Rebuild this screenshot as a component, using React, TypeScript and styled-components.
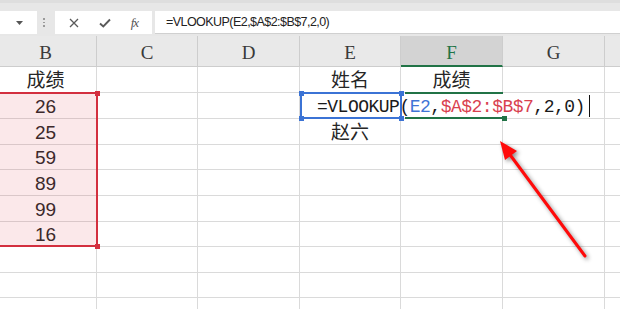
import React from 'react';
import styled, { createGlobalStyle } from 'styled-components';

const GlobalStyle = createGlobalStyle`
  html, body {
    margin: 0;
    padding: 0;
    background: #fff;
    overflow: hidden;
  }
`;

const colWidths = [102, 101, 102, 101, 102, 102, 102];
const rowHeights = [26, 26, 26, 25, 26, 26, 25, 26, 25, 26];
// H is scrolled past the right edge, so its label is not shown
const letters = ['B', 'C', 'D', 'E', 'F', 'G', ''];

// row index (1-based, as in the sheet) -> column index -> text
const data: Record<number, Record<number, string>> = {
  1: { 0: '成绩', 3: '姓名', 4: '成绩' },
  2: { 0: '26' },
  3: { 0: '25', 3: '赵六' },
  4: { 0: '59' },
  5: { 0: '89' },
  6: { 0: '99' },
  7: { 0: '16' },
};

const Page = styled.div`
  position: relative;
  width: 620px;
  height: 309px;
  overflow: hidden;
  display: flex;
  flex-direction: column;
  background: #fff;
`;

const FormulaBar = styled.div`
  display: flex;
  align-items: flex-start;
  height: 36px;
  box-sizing: border-box;
  background: #e7e7e7;
  border-top: 3px solid #dedede;
  padding-top: 8px;
  flex-shrink: 0;
`;

const NameBox = styled.div`
  width: 37px;
  height: 23px;
  background: #fff;
  display: flex;
  align-items: center;
  justify-content: flex-end;
  padding-right: 14px;
  box-sizing: border-box;
`;

const Grip = styled.div`
  width: 14px;
  margin-right: 4px;
  height: 23px;
  display: flex;
  flex-direction: column;
  align-items: center;
  justify-content: center;
  gap: 2px;
  span {
    width: 1.5px;
    height: 1.5px;
    background: #9a9a9a;
  }
`;

const ButtonGroup = styled.div`
  width: 97px;
  height: 23px;
  background: #fff;
  display: flex;
  align-items: center;
  justify-content: space-around;
  padding: 0 4px 0 4px;
  box-sizing: border-box;
`;

const FxLabel = styled.span`
  font-family: 'Liberation Serif', serif;
  font-style: italic;
  font-size: 13px;
  color: #555;
  letter-spacing: -1px;
`;

const FormulaInput = styled.div`
  flex: 1;
  height: 23px;
  margin-left: 3px;
  background: #fff;
  border-bottom: 1px solid #d0d0d0;
  box-sizing: border-box;
  display: flex;
  align-items: center;
  padding-left: 11px;
  font-family: 'Liberation Sans', 'Noto Sans CJK SC', sans-serif;
  font-size: 12.5px;
  letter-spacing: -0.55px;
  color: #222;
`;

const Sheet = styled.div<{ $cols: string; $rows: string }>`
  display: grid;
  grid-template-columns: ${(p) => p.$cols};
  grid-template-rows: ${(p) => p.$rows};
  margin-left: -5px;
`;

const HeaderCell = styled.div<{ $c: number; $active?: boolean }>`
  grid-row: 1;
  grid-column: ${(p) => p.$c + 1};
  box-sizing: border-box;
  background: ${(p) => (p.$active ? '#d3d3d3' : '#e9e9e9')};
  border-right: 1px solid #cdcdcd;
  border-bottom: ${(p) => (p.$active ? '2px solid #217346' : '1px solid #cdcdcd')};
  display: flex;
  align-items: flex-end;
  justify-content: center;
  padding-bottom: ${(p) => (p.$active ? '2px' : '3px')};
  font-family: 'Liberation Serif', serif;
  font-size: 19px;
  line-height: 20px;
  color: ${(p) => (p.$active ? '#217346' : '#3a3a3a')};
`;

const Cell = styled.div<{ $r: number; $c: number }>`
  grid-row: ${(p) => p.$r + 1};
  grid-column: ${(p) => p.$c + 1};
  box-sizing: border-box;
  border-right: 1px solid #dadada;
  border-bottom: 1px solid #dadada;
  display: flex;
  align-items: flex-end;
  justify-content: center;
  font-family: 'Liberation Sans', 'Noto Sans CJK SC', sans-serif;
  font-size: 19px;
  line-height: 22px;
  color: #262626;
  overflow: hidden;
  white-space: nowrap;
`;

const RangeMark = styled.div<{ $col: string; $row: string; $color: string; $fill?: string }>`
  grid-column: ${(p) => p.$col};
  grid-row: ${(p) => p.$row};
  position: relative;
  z-index: 2;
  margin: -1px -1px 0 0;
  border: 2px solid ${(p) => p.$color};
  background: ${(p) => p.$fill || 'transparent'};
  box-sizing: border-box;
  pointer-events: none;
`;

const Handle = styled.span<{ $color: string; $pos: 'tl' | 'tr' | 'bl' | 'br' }>`
  position: absolute;
  width: 5px;
  height: 5px;
  background: ${(p) => p.$color};
  ${(p) => (p.$pos[0] === 't' ? 'top: -3.5px;' : 'bottom: -3.5px;')}
  ${(p) => (p.$pos[1] === 'l' ? 'left: -3.5px;' : 'right: -3.5px;')}
`;

const ActiveMark = styled.div`
  grid-column: 5;
  grid-row: 3;
  position: relative;
  z-index: 2;
  margin: -1px 0 0 4px;
  border-top: 2px solid #217346;
  border-bottom: 2px solid #217346;
  pointer-events: none;
`;

const Editor = styled.div`
  grid-column: 4 / 7;
  grid-row: 3;
  z-index: 1;
  margin: 0 8px 1px 0;
  background: #fff;
  display: flex;
  align-items: center;
  padding: 2px 0 0 17px;
  font-family: 'Liberation Mono', monospace;
  font-size: 18px;
  letter-spacing: -0.5px;
  color: #1a1a1a;
  white-space: nowrap;
`;

const RefText = styled.span<{ $color: string }>`
  color: ${(p) => p.$color};
`;

const Caret = styled.span`
  display: inline-block;
  width: 1.5px;
  height: 22px;
  background: #111;
  margin-left: 4px;
  margin-top: -2px;
`;

const ArrowLayer = styled.svg`
  position: absolute;
  left: 0;
  top: 0;
  pointer-events: none;
  filter: drop-shadow(2px 2px 2px rgba(0, 0, 0, 0.45));
`;

function ToolbarIcons() {
  return (
    <>
      <svg width="10" height="10" viewBox="0 0 10 10">
        <path d="M1 1 L9 9 M9 1 L1 9" stroke="#5a5a5a" strokeWidth="1.3" fill="none" />
      </svg>
      <svg width="12" height="10" viewBox="0 0 12 10">
        <path d="M1 5.5 L4.3 8.5 L11 1.5" stroke="#5a5a5a" strokeWidth="1.9" fill="none" />
      </svg>
      <FxLabel>fx</FxLabel>
    </>
  );
}

export default function App() {
  const cols = colWidths.map((w) => `${w}px`).join(' ');
  const rows = ['31px', ...rowHeights.map((h) => `${h}px`)].join(' ');

  const cells: React.ReactNode[] = [];
  rowHeights.forEach((_, i) => {
    const r = i + 1;
    colWidths.forEach((__, c) => {
      const text = data[r]?.[c];
      cells.push(
        <Cell key={`${r}-${c}`} $r={r} $c={c}>
          {text}
        </Cell>
      );
    });
  });

  const red = '#d32f3f';
  const blue = '#3b73d5';

  return (
    <>
      <GlobalStyle />
      <Page>
        <FormulaBar>
          <NameBox>
            <svg width="7" height="4" viewBox="0 0 7 4">
              <path d="M0 0 H7 L3.5 4 Z" fill="#555" />
            </svg>
          </NameBox>
          <Grip>
            <span />
            <span />
            <span />
          </Grip>
          <ButtonGroup>
            <ToolbarIcons />
          </ButtonGroup>
          <FormulaInput>=VLOOKUP(E2,$A$2:$B$7,2,0)</FormulaInput>
        </FormulaBar>

        <Sheet $cols={cols} $rows={rows}>
          {letters.map((l, c) => (
            <HeaderCell key={c} $c={c} $active={l === 'F'}>
              {l}
            </HeaderCell>
          ))}
          {cells}

          <RangeMark $col="1" $row="3 / 9" $color={red} $fill="rgba(226, 64, 80, 0.12)">
            <Handle $color={red} $pos="tr" />
            <Handle $color={red} $pos="br" />
          </RangeMark>

          <Editor>
            =VLOOKUP(<RefText $color="#3f74d6">E2</RefText>,
            <RefText $color="#d9414f">$A$2:$B$7</RefText>,2,0)
            <Caret />
          </Editor>

          <RangeMark $col="4" $row="3" $color={blue}>
            <Handle $color={blue} $pos="tl" />
            <Handle $color={blue} $pos="tr" />
            <Handle $color={blue} $pos="bl" />
            <Handle $color={blue} $pos="br" />
          </RangeMark>

          <ActiveMark>
            <Handle $color="#217346" $pos="br" />
          </ActiveMark>
        </Sheet>

        <ArrowLayer width="620" height="309" viewBox="0 0 620 309">
          <line x1="585" y1="256" x2="508" y2="152" stroke="#ff0a0a" strokeWidth="3" strokeLinecap="round" />
          <polygon points="500,141 517,151 505,160" fill="#ff0a0a" />
        </ArrowLayer>
      </Page>
    </>
  );
}
